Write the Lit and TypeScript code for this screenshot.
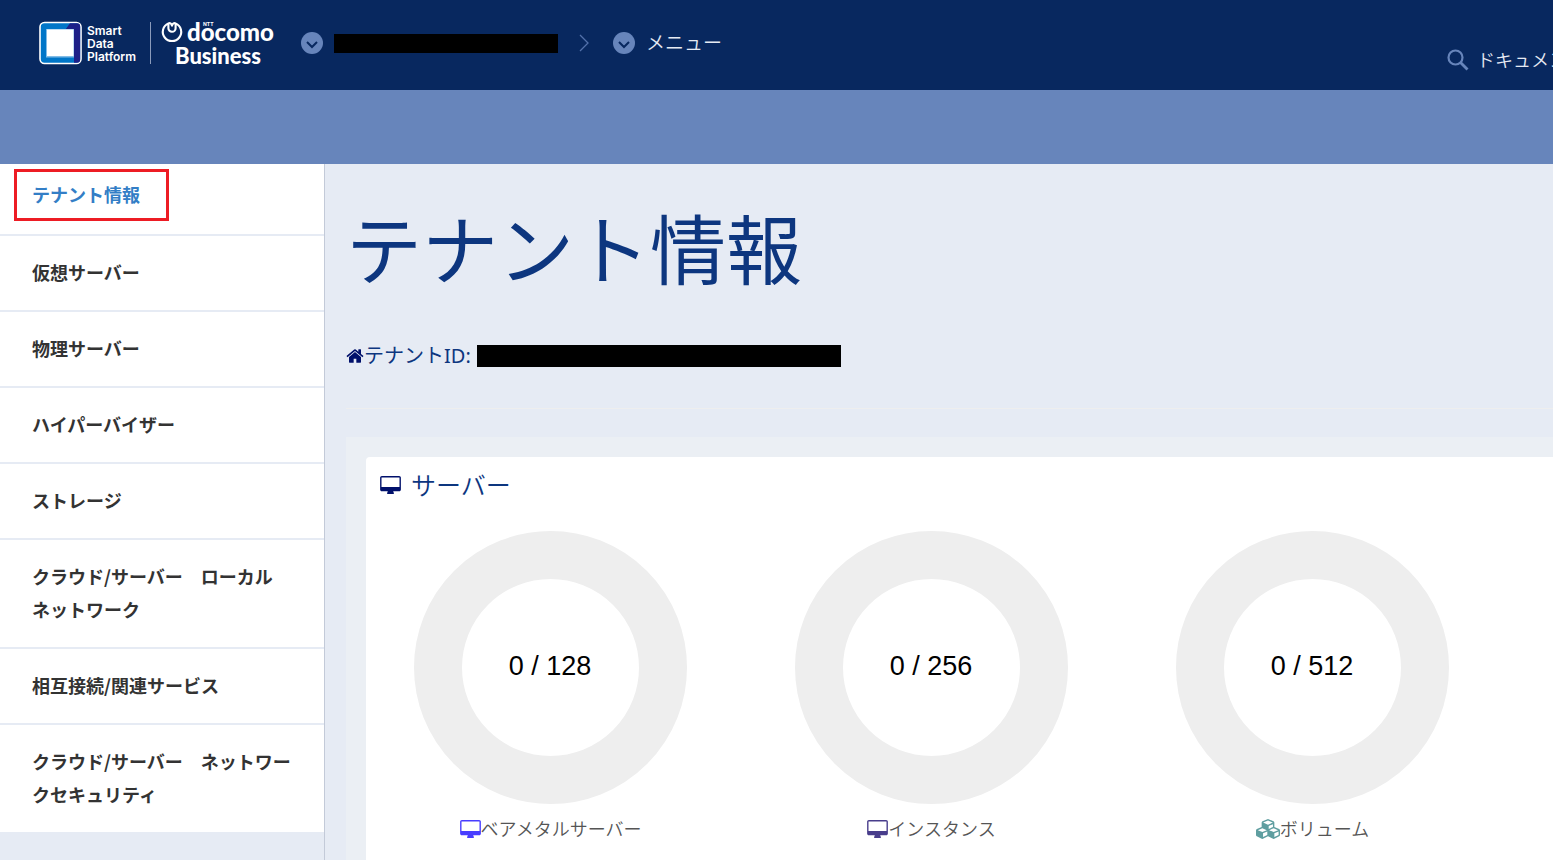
import { LitElement, html, css, svg } from "lit";
import { customElement, property } from "lit/decorators.js";

const ICONS = {
  home: {
    box: "64 128 1664 1536",
    d: "M1472 992v480q0 26-19 45t-45 19h-384v-384h-256v384h-384q-26 0-45-19t-19-45v-480q0-1 .5-3t.5-3l575-474 575 474q1 2 1 6zm223-69l-62 74q-8 9-21 11h-3q-13 0-21-7l-692-577-692 577q-12 8-24 7-13-2-21-11l-62-74q-8-10-7-23.5t11-21.5l719-599q32-26 76-26t76 26l244 204v-195q0-14 9-23t23-9h192q14 0 23 9t9 23v408l219 182q10 8 11 21.5t-7 23.5z",
  },
  desktop: {
    box: "-64 0 1920 1664",
    d: "M1728 992v-832q0-13-9.5-22.5t-22.5-9.5h-1600q-13 0-22.5 9.5t-9.5 22.5v832q0 13 9.5 22.5t22.5 9.5h1600q13 0 22.5-9.5t9.5-22.5zm128-832v1088q0 66-47 113t-113 47h-544q0 37 16 77.5t32 71 16 43.5q0 26-19 45t-45 19h-512q-26 0-45-19t-19-45q0-14 16-44t32-70 16-78h-544q-66 0-113-47t-47-113v-1088q0-66 47-113t113-47h1600q66 0 113 47t47 113z",
  },
  cubes: {
    box: "0 0 2176 1792",
    d: "M640 1632l384-192v-314l-384 164v342zm-64-454l404-173-404-173-404 173zm1088 454l384-192v-314l-384 164v342zm-64-454l404-173-404-173-404 173zm-448-293l384-165v-266l-384 164v267zm-64-379l441-189-441-189-441 189zm1088 518v416q0 36-19 67t-52 47l-448 224q-25 14-57 14t-57-14l-448-224q-4-2-7-4-2 2-7 4l-448 224q-25 14-57 14t-57-14l-448-224q-33-16-52-47t-19-67v-416q0-38 21.5-70t56.5-48l434-186v-400q0-38 21.5-70t56.5-48l448-192q23-10 50-10t50 10l448 192q35 16 56.5 48t21.5 70v400l434 186q36 16 57 48t21 70z",
  },
};

type IconName = keyof typeof ICONS;

@customElement("glyph-icon")
export class GlyphIcon extends LitElement {
  @property() name: IconName = "desktop";

  static styles = css`
    :host { display: inline-flex; flex: none; }
    .glyph { width: 100%; height: 100%; fill: currentColor; }
  `;

  render() {
    const icon = ICONS[this.name];
    return html`<svg class="glyph" viewBox=${icon.box} aria-hidden="true">${svg`<path d=${icon.d} />`}</svg>`;
  }
}

@customElement("quota-donut")
export class QuotaDonut extends LitElement {
  @property({ type: Number }) used = 0;
  @property({ type: Number }) total = 0;

  static styles = css`
    :host { display: block; }
    .chart { display: block; width: 273px; height: 273px; }
    .ring { fill: none; stroke: #eeeeee; stroke-width: 48; }
    .value {
      font-family: "Liberation Sans", Arial, sans-serif;
      font-size: 27px;
      fill: #000;
      text-anchor: middle;
    }
  `;

  render() {
    return html`
      <svg class="chart" viewBox="0 0 273 273" role="img">
        <circle class="ring" cx="136.5" cy="136.5" r="112.5"></circle>
        <text class="value" x="136" y="144">${this.used} / ${this.total}</text>
      </svg>
    `;
  }
}

@customElement("brand-logo")
export class BrandLogo extends LitElement {
  static styles = css`
    :host { display: block; flex: none; }
    .logo { display: block; width: 236px; height: 46px; fill: #fff; overflow: visible; }
    .platform { font: 600 12px Inter, "Liberation Sans", sans-serif; }
    .maker { font: 900 24px Lato, "Open Sans", sans-serif; }
    .unit { font: 900 22px Lato, "Open Sans", sans-serif; }
    .group { font: 700 5px Inter, sans-serif; }
  `;

  render() {
    return html`
      <svg class="logo" viewBox="0 0 236 46" role="img" aria-label="Smart Data Platform docomo Business">
        <rect x="1" y="1.5" width="41" height="41" rx="4.5" fill="#0076c8" stroke="#fff" stroke-width="1.6"></rect>
        <path d="M31 2.3H38Q41.2 2.3 41.2 5.5V38.5Q41.2 41.7 38 41.7H35V8.5H26.5Z" fill="#1d2088"></path>
        <path d="M7 8H35V36.5H7Z" fill="#82bce6"></path>
        <rect x="8" y="8.5" width="26.5" height="26.5"></rect>
        <text class="platform" x="48" y="14">Smart</text>
        <text class="platform" x="48" y="27">Data</text>
        <text class="platform" x="48" y="40">Platform</text>
        <rect x="111" y="1" width="1" height="42" fill="#8b9bbb"></rect>
        <path
          d="M129.4 2.4A9.2 9.2 0 1 0 136.6 2.4Q134.2 1.2 133 4.6 131.8 1.2 129.4 2.4V7.2A3.6 3.6 0 0 0 136.6 7.2V2.4"
          fill="none" stroke="#fff" stroke-width="2.1" stroke-linejoin="round"></path>
        <text class="group" x="164" y="5">NTT</text>
        <text class="maker" x="148" y="20">docomo</text>
        <text class="unit" x="136" y="43">Business</text>
      </svg>
    `;
  }
}

const NAV = [
  "テナント情報",
  "仮想サーバー",
  "物理サーバー",
  "ハイパーバイザー",
  "ストレージ",
  "クラウド/サーバー　ローカル\nネットワーク",
  "相互接続/関連サービス",
  "クラウド/サーバー　ネットワークセキュリティ",
];

const QUOTAS: { label: string; icon: IconName; tone: string; used: number; total: number }[] = [
  { label: "ベアメタルサーバー", icon: "desktop", tone: "blue", used: 0, total: 128 },
  { label: "インスタンス", icon: "desktop", tone: "indigo", used: 0, total: 256 },
  { label: "ボリューム", icon: "cubes", tone: "teal", used: 0, total: 512 },
];

@customElement("app-root")
export class AppRoot extends LitElement {
  static styles = css`
    :host {
      display: flex;
      flex-direction: column;
      min-height: 100vh;
      box-sizing: border-box;
      background: #e6ebf4;
      color: #0d367f;
      font-family: "Noto Sans", "Noto Sans CJK JP", sans-serif;
      line-height: 32px;
    }
    *, *::after { box-sizing: border-box; }
    a { color: inherit; text-decoration: none; }
    button {
      padding: 0;
      border: 0;
      background: none;
      color: inherit;
      font: inherit;
      display: flex;
      align-items: center;
      cursor: pointer;
    }
    .top {
      display: flex;
      align-items: flex-start;
      height: 90px;
      padding: 21px 0 0 39px;
      background: #08285f;
      color: #e6eaf3;
      font-size: 19px;
      font-weight: 350;
    }
    .crumbs { display: flex; align-items: center; height: 44px; margin-left: 26px; }
    .crumbs button { gap: 11px; }
    .disc { width: 22px; height: 22px; display: block; }
    .mask { display: block; background: #000; }
    .account { width: 224px; height: 19px; }
    .arrow { width: 12px; height: 18px; margin: 0 23px 0 20px; }
    .docs {
      display: flex;
      align-items: center;
      gap: 8px;
      width: 106px;
      margin: 23px 0 0 auto;
      overflow: hidden;
      white-space: nowrap;
      font-size: 18px;
    }
    .lens { width: 22px; height: 22px; flex: none; }
    .band { height: 74px; background: #6785bb; }
    .body { display: flex; flex: 1; }
    .side { width: 325px; flex: none; border-right: 1px solid #c3cad8; }
    .menu { list-style: none; margin: 0; padding: 0; }
    .menu li { border-bottom: 2px solid #e6ebf4; background: #fff; }
    .menu a {
      display: block;
      position: relative;
      padding: 20px 32px 21px;
      color: #333;
      font-family: "Noto Sans CJK JP", sans-serif;
      font-size: 18px;
      font-weight: 700;
      line-height: 33px;
      white-space: pre-line;
    }
    .menu .current { padding-top: 14px; padding-bottom: 23px; color: #337ec6; }
    .current::after {
      content: "";
      position: absolute;
      left: 14px;
      top: 5px;
      width: 155px;
      height: 52px;
      border: 3px solid #ed1c24;
    }
    .main { flex: 1; min-width: 0; padding-left: 21px; display: flex; flex-direction: column; }
    h1 { margin: 30px 0 0; font-size: 76px; line-height: 112px; font-weight: 400; }
    .tenant { display: flex; align-items: center; margin-top: 34px; font-size: 20px; font-weight: 400; }
    .home { width: 18px; height: 16px; color: #00106b; }
    .tenant-id { width: 364px; height: 22px; margin-left: 6px; }
    .rule { width: 100%; height: 1px; margin: 36px 0 28px; border: 0; background: #eeeeee; }
    .well { flex: 1; display: flex; padding: 20px 0 0 20px; background: #ebeff4; }
    .panel { flex: 1; background: #fff; border-radius: 4px 0 0 0; padding: 12px 50px 0 0; }
    h2 {
      display: flex;
      align-items: center;
      gap: 10px;
      margin: 0 0 30px 14px;
      font-size: 25px;
      line-height: 32px;
      font-weight: 350;
    }
    .heading-icon { width: 21px; height: 18px; color: #00106b; }
    .quotas { display: grid; grid-template-columns: repeat(3, 1fr); margin-left: -6px; }
    .quota { display: flex; flex-direction: column; align-items: center; gap: 9px; margin: 0; }
    figcaption { display: flex; align-items: center; color: #555; font-size: 18px; font-weight: 350; }
    figcaption .blue, figcaption .indigo { width: 21px; height: 18px; }
    .blue { color: #483dff; }
    .indigo { color: #483d8b; }
    .teal { width: 24px; height: 20px; color: #5f9ea0; }
  `;

  private disc() {
    return html`<svg class="disc" viewBox="0 0 22 22" aria-hidden="true">
      <circle cx="11" cy="11" r="11" fill="#6785bb"></circle>
      <path d="M6 10l5 5 5-5" fill="none" stroke="#08285f" stroke-width="2"></path>
    </svg>`;
  }

  render() {
    return html`
      <header class="top">
        <a href="#" aria-label="Smart Data Platform"><brand-logo></brand-logo></a>
        <nav class="crumbs">
          <button type="button" aria-label="アカウント">${this.disc()}<span class="mask account"></span></button>
          <svg class="arrow" viewBox="0 0 12 18" aria-hidden="true">
            <path d="M2 1l8 8-8 8" fill="none" stroke="#5271aa" stroke-width="1.3"></path>
          </svg>
          <button type="button">${this.disc()}<span>メニュー</span></button>
        </nav>
        <a class="docs" href="#">
          <svg class="lens" viewBox="0 0 22 22" aria-hidden="true">
            <circle cx="8.5" cy="8.5" r="7" fill="none" stroke="#6785bb" stroke-width="2.2"></circle>
            <path d="M13.5 13.5l7 7" stroke="#6785bb" stroke-width="2.8"></path>
          </svg>
          <span>ドキュメント</span>
        </a>
      </header>
      <div class="band"></div>
      <div class="body">
        <nav class="side">
          <ul class="menu">
            ${NAV.map((label, i) => html`<li><a href="#" class=${i === 0 ? "current" : "entry"}>${label}</a></li>`)}
          </ul>
        </nav>
        <main class="main">
          <h1>テナント情報</h1>
          <div class="tenant">
            <glyph-icon class="home" name="home"></glyph-icon>
            <span>テナントID:</span>
            <span class="mask tenant-id"></span>
          </div>
          <hr class="rule" />
          <div class="well">
            <section class="panel">
              <h2><glyph-icon class="heading-icon" name="desktop"></glyph-icon>サーバー</h2>
              <div class="quotas">
                ${QUOTAS.map(
                  (q) => html`<figure class="quota">
                    <quota-donut .used=${q.used} .total=${q.total}></quota-donut>
                    <figcaption><glyph-icon class=${q.tone} name=${q.icon}></glyph-icon>${q.label}</figcaption>
                  </figure>`
                )}
              </div>
            </section>
          </div>
        </main>
      </div>
    `;
  }
}
